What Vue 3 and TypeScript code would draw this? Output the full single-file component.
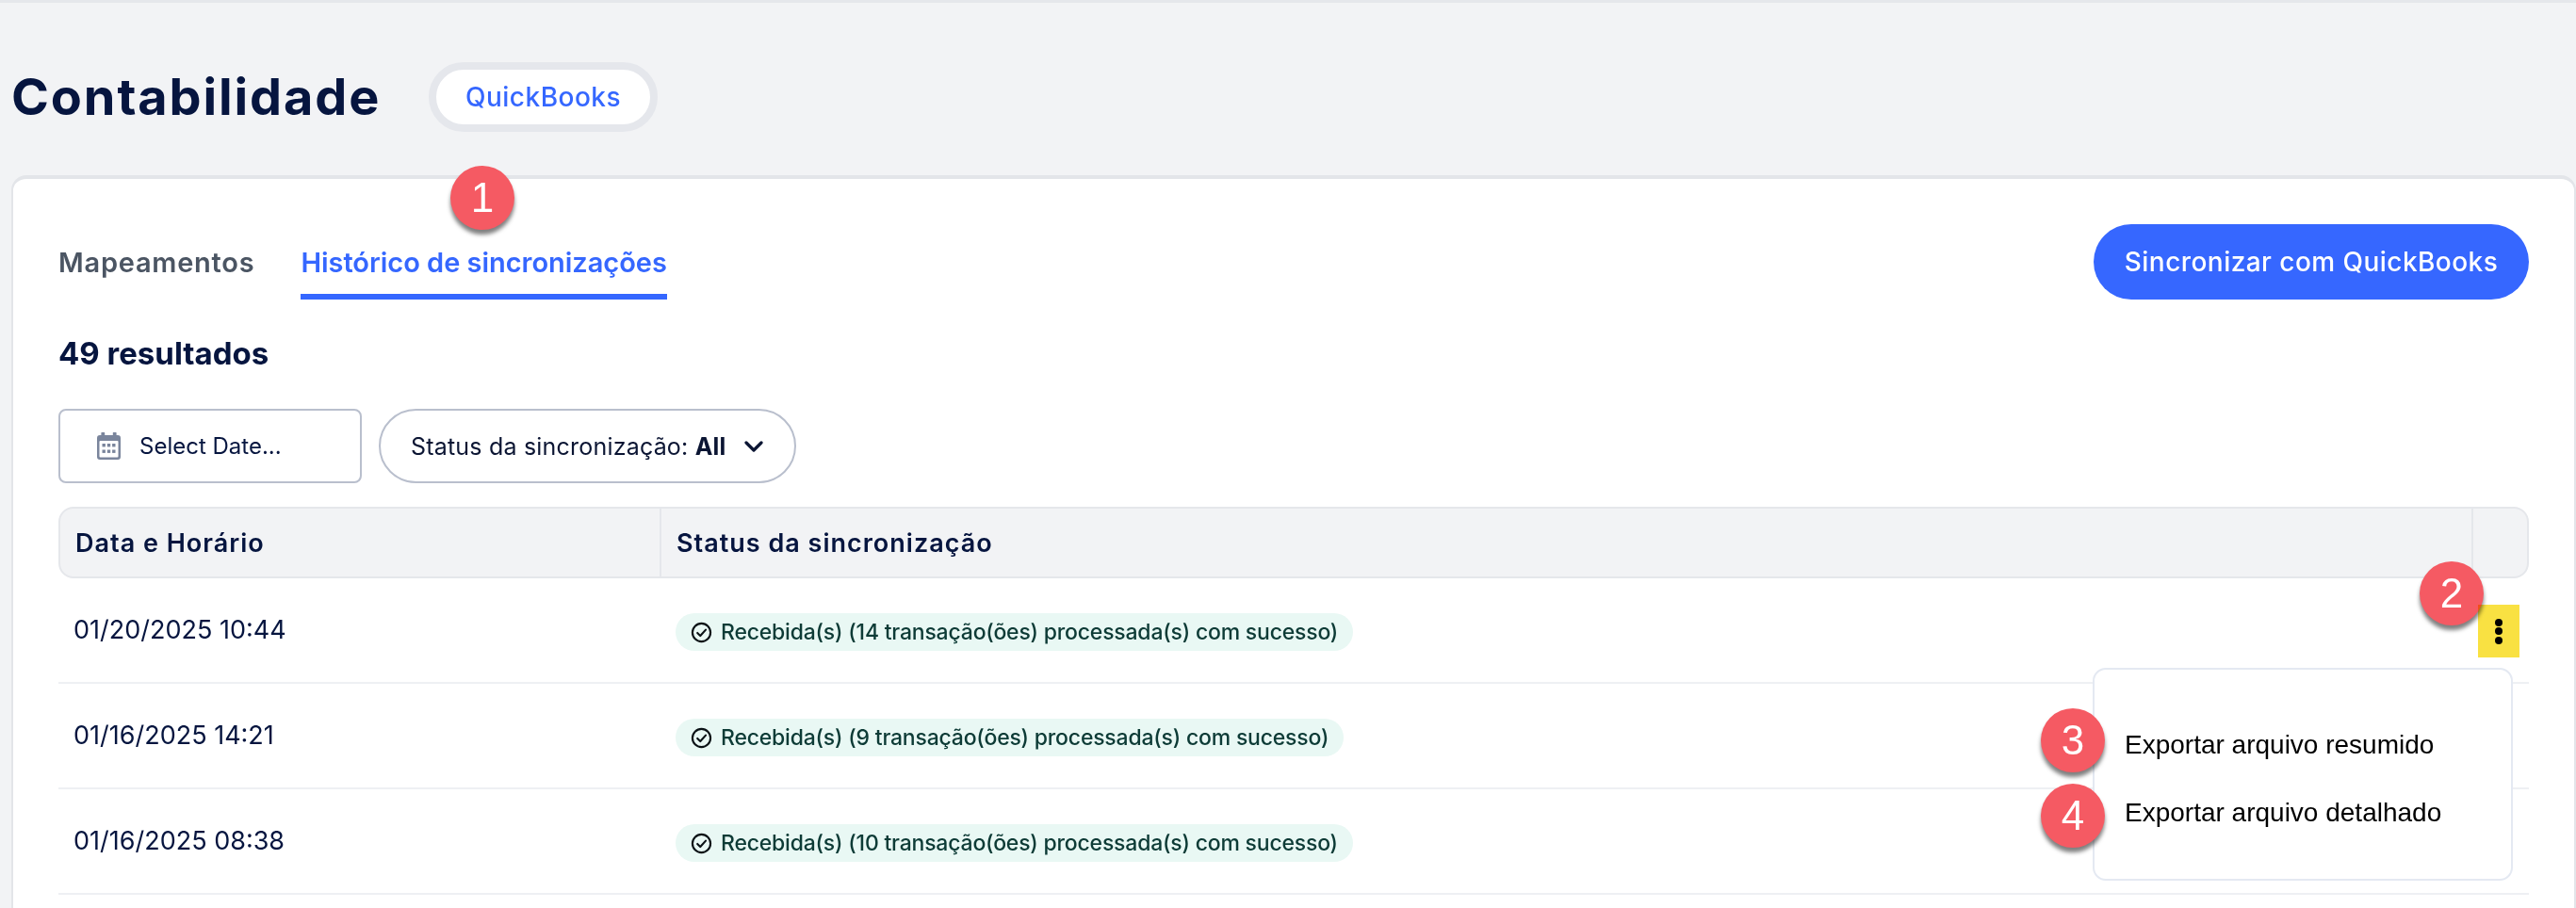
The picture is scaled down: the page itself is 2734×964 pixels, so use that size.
<script setup lang="ts">
interface SyncRow {
  date: string
  count: number
}
const rows: SyncRow[] = [
  { date: '01/20/2025 10:44', count: 14 },
  { date: '01/16/2025 14:21', count: 9 },
  { date: '01/16/2025 08:38', count: 10 },
]
const marks = [
  { n: 1, cls: 'm1' },
  { n: 2, cls: 'm2' },
  { n: 3, cls: 'm3' },
  { n: 4, cls: 'm4' },
]
</script>

<template>
  <div class="page">
    <header class="head">
      <h1 class="title">Contabilidade</h1>
      <span class="chip">QuickBooks</span>
    </header>

    <section class="card">
      <div class="tabbar">
        <nav class="tabs">
          <a class="tab">Mapeamentos</a>
          <a class="tab active">Histórico de sincronizações</a>
        </nav>
        <button class="sync">Sincronizar com QuickBooks</button>
      </div>

      <h2 class="results">49 resultados</h2>

      <div class="filters">
        <div class="date">
          <svg class="cal" viewBox="0 0 25 29" width="25" height="29">
            <path fill="#7a859c" d="M5 0h2.6a.6.6 0 0 1 .6.6V3h8.6V.6a.6.6 0 0 1 .6-.6H20a.6.6 0 0 1 .6.6V3H22a3 3 0 0 1 3 3v20a3 3 0 0 1-3 3H3a3 3 0 0 1-3-3V6a3 3 0 0 1 3-3h1.400V.6A.6.6 0 0 1 5 0z"/>
            <rect x="2.500" y="9" width="20" height="17.500" rx="1" fill="#fff"/>
            <g fill="#7a859c">
              <rect x="5.500" y="12" width="3.400" height="3.400"/>
              <rect x="10.800" y="12" width="3.400" height="3.400"/>
              <rect x="16.100" y="12" width="3.400" height="3.400"/>
              <rect x="5.500" y="18.500" width="3.400" height="3.400"/>
              <rect x="10.800" y="18.500" width="3.400" height="3.400"/>
              <rect x="16.100" y="18.500" width="3.400" height="3.400"/>
            </g>
          </svg>
          <span>Select Date...</span>
        </div>
        <div class="status">
          <span>Status da sincronização: <b>All</b></span>
          <svg viewBox="0 0 20 12" width="20" height="12">
            <path d="M2 2l8 8 8-8" fill="none" stroke="#0b1533" stroke-width="3.200" stroke-linecap="round" stroke-linejoin="round"/>
          </svg>
        </div>
      </div>

      <div class="table">
        <div class="thead">
          <div class="th c1">Data e Horário</div>
          <div class="th c2">Status da sincronização</div>
          <div class="th c3"></div>
        </div>
        <div v-for="(row, i) in rows" :key="row.date" class="tr">
          <div class="td-date">{{ row.date }}</div>
          <div class="td-status">
            <span class="badge">
              <svg viewBox="0 0 24 24" width="23" height="23">
                <circle cx="12" cy="12" r="10" fill="none" stroke="#0b1216" stroke-width="2.200"/>
                <path d="M7.500 12.500l3.200 3.200 6-6.700" fill="none" stroke="#0b1216" stroke-width="2.200" stroke-linecap="round" stroke-linejoin="round"/>
              </svg>
              <span>Recebida(s) ({{ row.count }} transação(ões) processada(s) com sucesso)</span>
            </span>
          </div>
          <div class="td-action">
            <template v-if="i === 0">
              <div class="kebab"><i></i><i></i><i></i></div>
              <div class="menu">
                <div class="item">Exportar arquivo resumido</div>
                <div class="item">Exportar arquivo detalhado</div>
              </div>
            </template>
          </div>
        </div>
      </div>
    </section>

    <span v-for="m in marks" :key="m.n" class="mark" :class="m.cls">{{ m.n }}</span>
  </div>
</template>

<style scoped>
.page {
  position: relative;
  height: 964px;
  box-sizing: border-box;
  overflow: hidden;
  background: #f2f3f5;
  border-top: 3px solid #e5e7eb;
  font-family: Inter, "Noto Sans", sans-serif;
  color: #06153f;
}
.head {
  display: flex;
  align-items: center;
  padding: 63px 0 46px 12px;
}
.title {
  flex: 0 0 443px;
  margin: 0;
  font-size: 54px;
  line-height: 74px;
  font-weight: 700;
  letter-spacing: 1.900px;
  color: #06153f;
}
.chip {
  box-sizing: border-box;
  width: 243px;
  height: 74px;
  display: flex;
  align-items: center;
  justify-content: center;
  background: #fff;
  border: 8px solid #e5e7ec;
  border-radius: 37px;
  color: #3567ff;
  font-size: 28px;
  font-weight: 500;
  letter-spacing: 0.500px;
}
.card {
  margin-left: 12px;
  height: 800px;
  box-sizing: border-box;
  background: #fff;
  border: solid #e3e5e9;
  border-width: 4px 2px 0;
  border-radius: 16px 16px 0 0;
  padding: 48px 48px 0;
}
.tabbar {
  display: flex;
  justify-content: space-between;
}
.tabs {
  display: flex;
  gap: 49px;
}
.tab {
  height: 80px;
  box-sizing: border-box;
  padding-top: 6px;
  display: flex;
  align-items: center;
  border-bottom: 6px solid transparent;
  font-size: 29px;
  font-weight: 600;
  letter-spacing: 0.750px;
  color: #4b5563;
}
.tab.active {
  letter-spacing: -0.030px;
  color: #3567ff;
  border-bottom-color: #3567ff;
}
.sync {
  width: 462px;
  height: 80px;
  border: 0;
  border-radius: 40px;
  background: #3667ff;
  color: #fff;
  font-family: inherit;
  font-size: 28px;
  font-weight: 500;
  letter-spacing: 0.450px;
}
.results {
  margin: 36px 0 0;
  font-size: 33px;
  line-height: 42px;
  font-weight: 700;
}
.filters {
  display: flex;
  gap: 18px;
  margin-top: 38px;
}
.date,
.status {
  box-sizing: border-box;
  height: 79px;
  display: flex;
  align-items: center;
  border: 2px solid #b9bfcd;
  font-size: 24px;
}
.date {
  width: 322px;
  border-radius: 8px;
  padding-left: 39px;
  gap: 20px;
}
.status {
  width: 443px;
  border-radius: 40px;
  padding-left: 32px;
  gap: 19px;
  font-size: 25px;
  letter-spacing: 0.200px;
  color: #0b1533;
}
.status b {
  font-weight: 700;
}
.table {
  margin-top: 25px;
}
.thead {
  display: grid;
  grid-template-columns: 638px 1fr 57px;
  height: 76px;
  box-sizing: border-box;
  background: #f2f3f5;
  border: 2px solid #e5e7eb;
  border-radius: 16px;
}
.th {
  display: flex;
  align-items: center;
  font-size: 27px;
  font-weight: 600;
  letter-spacing: 1px;
}
.c1 {
  padding-left: 16px;
  border-right: 2px solid #e5e7eb;
}
.c2 {
  padding-left: 16px;
  border-right: 2px solid #e5e7eb;
}
.tr {
  display: grid;
  grid-template-columns: 640px 1fr 59px;
  height: 112px;
  box-sizing: border-box;
  border-bottom: 2px solid #eef0f3;
}
.td-date {
  display: flex;
  align-items: center;
  padding: 0 0 2px 16px;
  font-size: 27px;
}
.td-status {
  display: flex;
  align-items: center;
  padding: 4px 0 0 15px;
}
.badge {
  height: 40px;
  display: inline-flex;
  align-items: center;
  gap: 9px;
  padding: 0 16px;
  border-radius: 20px;
  background: #e9f8f4;
  color: #0d3b36;
  font-size: 23px;
  font-weight: 500;
  letter-spacing: -0.200px;
}
.td-action {
  position: relative;
}
.kebab {
  position: relative;
  z-index: 3;
  width: 44px;
  height: 56px;
  margin: 28px 0 0 5px;
  display: flex;
  flex-direction: column;
  align-items: center;
  justify-content: center;
  gap: 1.500px;
  background: #f9e142;
  mix-blend-mode: multiply;
}
.kebab i {
  width: 8px;
  height: 8px;
  border-radius: 50%;
  background: #000;
}
.menu {
  position: absolute;
  z-index: 1;
  top: 95px;
  right: 17px;
  width: 446px;
  box-sizing: border-box;
  padding: 44px 0 34px 32px;
  background: #fff;
  border: 2px solid #e4e9f2;
  border-radius: 14px;
  font-family: "Liberation Sans", Arial, sans-serif;
  font-size: 28px;
  color: #000;
}
.item {
  height: 72px;
  display: flex;
  align-items: center;
}
.mark {
  position: absolute;
  z-index: 2;
  width: 68px;
  height: 68px;
  border-radius: 50%;
  display: flex;
  align-items: center;
  justify-content: center;
  background: #f55a63;
  box-shadow: 0 5px 4px rgba(0, 0, 0, 0.5);
  color: #fff;
  font-family: "Liberation Sans", Arial, sans-serif;
  font-size: 44px;
}
.m1 { left: 478px; top: 173px; }
.m2 { left: 2568px; top: 593px; }
.m3 { left: 2166px; top: 749px; }
.m4 { left: 2166px; top: 829px; }
</style>

<style>
html, body {
  margin: 0;
  background: #fff;
  overflow: hidden;
}
</style>
